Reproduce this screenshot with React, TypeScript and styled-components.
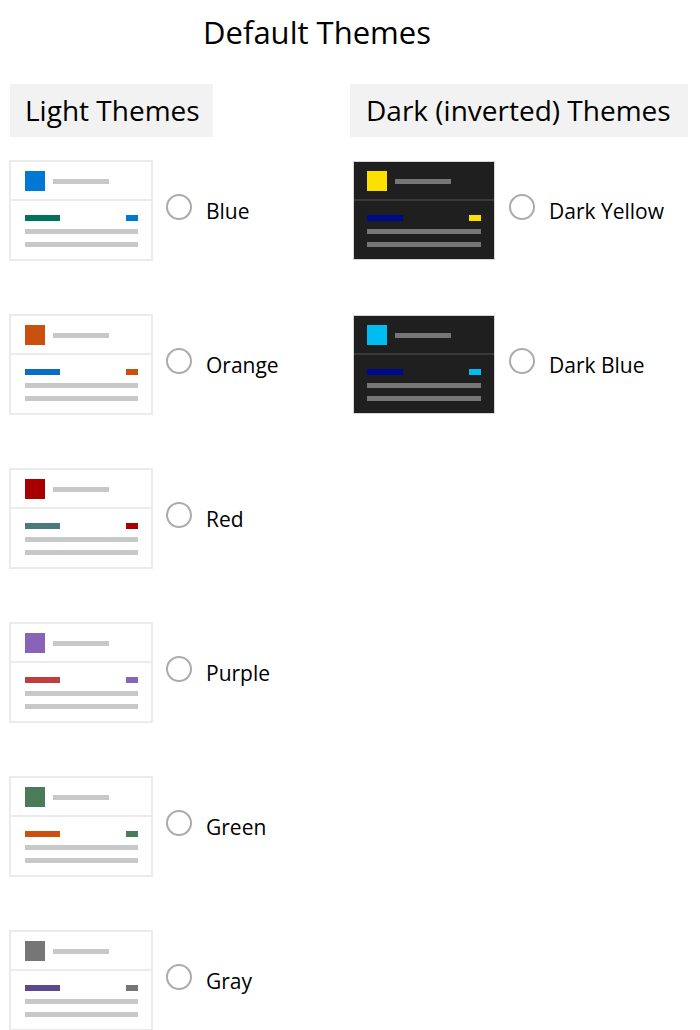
import React from "react";
import styled, { createGlobalStyle } from "styled-components";

const Global = createGlobalStyle`
  html, body { margin: 0; padding: 0; background: #ffffff; }
  body { font-family: "Open Sans", "Noto Sans", sans-serif; color: #000; }
`;

type Theme = {
  name: string;
  square: string;
  bar: string;
  accent: string;
};

const light: Theme[] = [
  { name: "Blue", square: "#0078d4", bar: "#00735f", accent: "#0078d4" },
  { name: "Orange", square: "#ca5010", bar: "#0a6fc4", accent: "#ca5010" },
  { name: "Red", square: "#a80000", bar: "#4b7a7c", accent: "#a80000" },
  { name: "Purple", square: "#8764b8", bar: "#c13d3e", accent: "#8764b8" },
  { name: "Green", square: "#4a7c59", bar: "#ca5010", accent: "#4a7c59" },
  { name: "Gray", square: "#767676", bar: "#5c4a8a", accent: "#767676" },
];

const dark: Theme[] = [
  { name: "Dark Yellow", square: "#fce100", bar: "#00098a", accent: "#fce100" },
  { name: "Dark Blue", square: "#00bcf2", bar: "#00098a", accent: "#00bcf2" },
];

const Page = styled.div`
  width: 700px;
  min-height: 1030px;
  box-sizing: border-box;
  padding-top: 12px;
`;

const Title = styled.h1`
  margin: 0;
  width: 634px;
  text-align: center;
  font-size: 31px;
  font-weight: 400;
  line-height: 40px;
`;

const Columns = styled.div`
  display: grid;
  grid-template-columns: 340px 1fr;
  padding-left: 10px;
  margin-top: 32px;
`;

const Column = styled.div`
  display: flex;
  flex-direction: column;
  align-items: flex-start;
`;

const Heading = styled.h2<{ $wide?: boolean }>`
  margin: 0 0 23px 0;
  height: 53px;
  line-height: 53px;
  padding: 0 ${(p) => (p.$wide ? "17px" : "13px")} 0 ${(p) => (p.$wide ? "16px" : "15px")};
  background: #f2f2f2;
  font-size: 28px;
  font-weight: 400;
  white-space: nowrap;
`;

const List = styled.div`
  display: flex;
  flex-direction: column;
  gap: 53px;
`;

const Row = styled.div<{ $dark?: boolean }>`
  display: flex;
  align-items: flex-start;
  height: 101px;
  margin-left: ${(p) => (p.$dark ? "3px" : "-1px")};
`;

const Card = styled.div<{ $dark?: boolean }>`
  box-sizing: border-box;
  width: ${(p) => (p.$dark ? "142px" : "144px")};
  height: ${(p) => (p.$dark ? "99px" : "101px")};
  margin-top: ${(p) => (p.$dark ? "1px" : "0")};
  border: ${(p) => (p.$dark ? "1px solid #d6d6d6" : "2px solid #ebebeb")};
  background: ${(p) => (p.$dark ? "#1f1f1f" : "#ffffff")};
  display: flex;
  flex-direction: column;
`;

const CardTop = styled.div<{ $dark?: boolean }>`
  display: flex;
  align-items: center;
  gap: 8px;
  padding: 9px 0 8px ${(p) => (p.$dark ? "13px" : "14px")};
  border-bottom: 2px solid ${(p) => (p.$dark ? "#3a3a3a" : "#ebebeb")};
`;

const Square = styled.div<{ $color: string }>`
  width: 20px;
  height: 20px;
  background: ${(p) => p.$color};
`;

const Line = styled.div<{ $color: string; $w: number; $h?: number }>`
  width: ${(p) => p.$w}px;
  height: ${(p) => p.$h ?? 5}px;
  background: ${(p) => p.$color};
`;

const CardBody = styled.div<{ $dark?: boolean }>`
  display: flex;
  flex-direction: column;
  gap: 8px;
  padding: 14px 13px 0 ${(p) => (p.$dark ? "13px" : "14px")};
`;

const BarRow = styled.div`
  display: flex;
  justify-content: space-between;
  align-items: center;
`;

const Radio = styled.span<{ $dark?: boolean }>`
  box-sizing: border-box;
  width: 26px;
  height: 26px;
  border-radius: 50%;
  border: 2px solid #ababab;
  margin: 34px 14px 0 ${(p) => (p.$dark ? "14px" : "13px")};
  flex-shrink: 0;
`;

const Label = styled.span`
  margin-top: 38px;
  font-size: 21px;
  line-height: 26px;
  white-space: nowrap;
`;

function ThemeRow({ t, isDark }: { t: Theme; isDark?: boolean }) {
  const gray = isDark ? "#767676" : "#c8c8c8";
  return (
    <Row $dark={isDark}>
      <Card $dark={isDark}>
        <CardTop $dark={isDark}>
          <Square $color={t.square} />
          <Line $color={gray} $w={56} />
        </CardTop>
        <CardBody $dark={isDark}>
          <BarRow>
            <Line $color={t.bar} $w={isDark ? 36 : 35} $h={6} />
            <Line $color={t.accent} $w={12} $h={6} />
          </BarRow>
          <Line $color={gray} $w={isDark ? 114 : 113} />
          <Line $color={gray} $w={isDark ? 114 : 113} />
        </CardBody>
      </Card>
      <Radio $dark={isDark} />
      <Label>{t.name}</Label>
    </Row>
  );
}

export default function App() {
  return (
    <>
      <Global />
      <Page>
        <Title>Default Themes</Title>
        <Columns>
          <Column>
            <Heading>Light Themes</Heading>
            <List>
              {light.map((t) => (
                <ThemeRow key={t.name} t={t} />
              ))}
            </List>
          </Column>
          <Column>
            <Heading $wide>Dark (inverted) Themes</Heading>
            <List>
              {dark.map((t) => (
                <ThemeRow key={t.name} t={t} isDark />
              ))}
            </List>
          </Column>
        </Columns>
      </Page>
    </>
  );
}
